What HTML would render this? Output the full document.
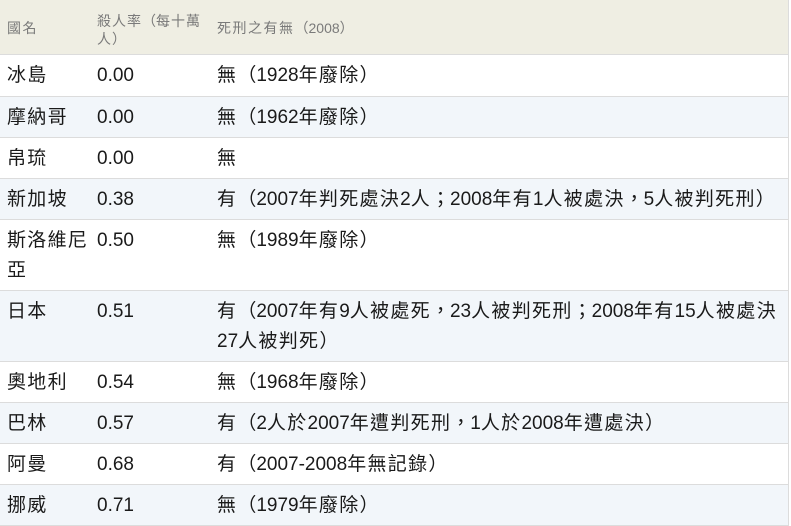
<!DOCTYPE html>
<html><head><meta charset="utf-8"><style>
body{margin:0;width:791px;height:526px;overflow:hidden;background:#fff;font-family:"Liberation Sans","Noto Sans CJK TC",sans-serif;color:#1a1a1a;text-spacing-trim:space-all}
.r{position:absolute;left:0;width:789px;border-bottom:1px solid #dcdcdc;border-right:1px solid #dcdcdc;box-sizing:border-box;font-size:19px;line-height:30px;letter-spacing:1.3px}
.r div{position:absolute;top:6px;white-space:nowrap}
.a{left:7px}.b{left:97px;letter-spacing:0}.c{left:217px}
.h{background:#efeee3;color:#7a7a7a;font-size:14px;line-height:18px;letter-spacing:1.5px}
.h div{top:12px}
.h .b{letter-spacing:1px}
.bl{background:#f2f6fa}
.o{display:inline-block;width:1em;text-align:right}
.p{display:inline-block;width:1em;text-align:left}
i{font-style:normal;letter-spacing:0}
</style></head><body>
<div class="r h" style="top:0;height:55px"><div class="a" style="top:19px">國名</div><div class="b">殺人率<span class="o">（</span>每十萬<br>人<span class="p">）</span></div><div class="c" style="top:19px">死刑之有無<span class="o">（</span><i>2008</i><span class="p">）</span></div></div>
<div class="r" style="top:55px;height:42px"><div class="a">冰島</div><div class="b">0.00</div><div class="c">無<span class="o">（</span><i>1928</i>年廢除<span class="p">）</span></div></div>
<div class="r bl" style="top:97px;height:41px"><div class="a">摩納哥</div><div class="b">0.00</div><div class="c">無<span class="o">（</span><i>1962</i>年廢除<span class="p">）</span></div></div>
<div class="r" style="top:138px;height:41px"><div class="a">帛琉</div><div class="b">0.00</div><div class="c">無</div></div>
<div class="r bl" style="top:179px;height:41px"><div class="a">新加坡</div><div class="b">0.38</div><div class="c">有<span class="o">（</span><i>2007</i>年判死處決<i>2</i>人<span class="p">；</span><i>2008</i>年有<i>1</i>人被處決<span class="p">，</span><i>5</i>人被判死刑<span class="p">）</span></div></div>
<div class="r" style="top:220px;height:71px"><div class="a">斯洛維尼<br>亞</div><div class="b">0.50</div><div class="c">無<span class="o">（</span><i>1989</i>年廢除<span class="p">）</span></div></div>
<div class="r bl" style="top:291px;height:71px"><div class="a">日本</div><div class="b">0.51</div><div class="c">有<span class="o">（</span><i>2007</i>年有<i>9</i>人被處死<span class="p">，</span><i>23</i>人被判死刑<span class="p">；</span><i>2008</i>年有<i>15</i>人被處決<br><i>27</i>人被判死<span class="p">）</span></div></div>
<div class="r" style="top:362px;height:41px"><div class="a">奧地利</div><div class="b">0.54</div><div class="c">無<span class="o">（</span><i>1968</i>年廢除<span class="p">）</span></div></div>
<div class="r bl" style="top:403px;height:41px"><div class="a">巴林</div><div class="b">0.57</div><div class="c">有<span class="o">（</span><i>2</i>人於<i>2007</i>年遭判死刑<span class="p">，</span><i>1</i>人於<i>2008</i>年遭處決<span class="p">）</span></div></div>
<div class="r" style="top:444px;height:41px"><div class="a">阿曼</div><div class="b">0.68</div><div class="c">有<span class="o">（</span><i>2007-2008</i>年無記錄<span class="p">）</span></div></div>
<div class="r bl" style="top:485px;height:41px"><div class="a">挪威</div><div class="b">0.71</div><div class="c">無<span class="o">（</span><i>1979</i>年廢除<span class="p">）</span></div></div>
</body></html>
